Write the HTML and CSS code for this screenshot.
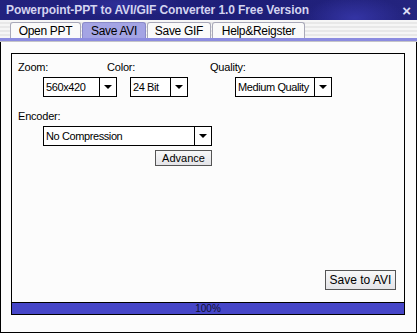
FILE: index.html
```html
<!DOCTYPE html>
<html lang="en">
<head>
    <meta charset="UTF-8">
    <title>Powerpoint-PPT to AVI/GIF Converter</title>
    <link rel="stylesheet" href="styles.css">
</head>
<body>
    <div class="window">
        <div class="titlebar">
            <span class="title">Powerpoint-PPT to AVI/GIF Converter 1.0 Free Version</span>
            <span class="close">&#215;</span>
        </div>

        <div class="tabs">
            <div class="tab">Open PPT</div>
            <div class="tab active">Save AVI</div>
            <div class="tab">Save GIF</div>
            <div class="tab">Help&amp;Reigster</div>
        </div>
        <div class="tab-band"></div>

        <div class="panel">
            <div class="frame">
                <div class="form">
                    <div class="row">
                        <div class="field zoom">
                            <div class="label">Zoom:</div>
                            <div class="combo w-zoom"><span class="value">560x420</span><span class="arrow"></span></div>
                        </div>
                        <div class="field color">
                            <div class="label">Color:</div>
                            <div class="combo w-color"><span class="value">24 Bit</span><span class="arrow"></span></div>
                        </div>
                        <div class="field quality">
                            <div class="label">Quality:</div>
                            <div class="combo w-quality"><span class="value">Medium Quality</span><span class="arrow"></span></div>
                        </div>
                    </div>

                    <div class="field encoder">
                        <div class="label">Encoder:</div>
                        <div class="combo w-encoder"><span class="value">No Compression</span><span class="arrow"></span></div>
                        <div class="advance-row">
                            <button class="btn advance">Advance</button>
                        </div>
                    </div>

                    <div class="save-row">
                        <button class="btn save">Save to AVI</button>
                    </div>
                </div>
                <div class="progress">100%</div>
            </div>
        </div>
    </div>
</body>
</html>
```

FILE: styles.css
```css
body {
    margin: 0;
    width: 417px;
    height: 333px;
    overflow: hidden;
    background: #fcfcfc;
    font-family: "Liberation Sans", Arial, sans-serif;
    color: #000;
}

.window {
    display: flex;
    flex-direction: column;
    height: 333px;
}

.titlebar {
    height: 20px;
    display: flex;
    align-items: center;
    justify-content: space-between;
    padding: 0 6px;
    background:
        radial-gradient(ellipse 50px 22px at 355px 18px, #3434a4, rgba(52, 52, 164, 0)),
        radial-gradient(ellipse 60px 14px at 120px 4px, #2e2e98, rgba(46, 46, 152, 0)),
        linear-gradient(to right, #22227e, #1e1e78 60%, #24247f);
}

.title {
    font-weight: bold;
    font-size: 12px;
    color: #d4d4f0;
    letter-spacing: -0.1px;
}

.close {
    color: #e0e0f8;
    font-size: 15px;
    font-weight: bold;
    line-height: 1;
}

.tabs {
    height: 18px;
    display: flex;
    align-items: flex-end;
    gap: 1px;
    padding-left: 10px;
    background: repeating-linear-gradient(to bottom, #f6f6f6 0 2px, #e8e8e8 2px 4px);
}

.tab {
    box-sizing: border-box;
    height: 16px;
    display: flex;
    align-items: center;
    justify-content: center;
    white-space: nowrap;
    font-size: 12px;
    letter-spacing: -0.3px;
    border: 1px solid #a8a8b8;
    border-bottom: none;
    border-radius: 3px 3px 0 0;
    background: #fafafa;
}

.tab:nth-child(1) { width: 71px; }
.tab:nth-child(2) { width: 64px; }
.tab:nth-child(3) { width: 64px; }
.tab:nth-child(4) { width: 93px; }

.tab.active {
    background: #a4a4e4;
    border-color: #8a8ac8;
}

.tab-band {
    height: 3px;
    background: #8c8ce0;
    border-bottom: 1px solid #c4c4c8;
}

.panel {
    flex: 1;
    border: 1px solid #000;
    border-top: none;
    padding: 11px 11px 17px 10px;
    display: flex;
}

.frame {
    flex: 1;
    border: 1px solid #000;
    display: flex;
    flex-direction: column;
}

.form {
    flex: 1;
    padding: 7px 0 0 6px;
    display: flex;
    flex-direction: column;
}

.row {
    display: flex;
}

.field.zoom { width: 89px; }
.field.color { width: 103px; }

.label {
    font-size: 11px;
    height: 16px;
    letter-spacing: -0.2px;
}

.combo {
    margin-left: 25px;
    height: 18px;
    border: 1px solid #000;
    display: flex;
    background: #fff;
    font-size: 11px;
    letter-spacing: -0.4px;
    white-space: nowrap;
}

.field.color .combo { margin-left: 23px; }

.w-zoom { width: 72px; }
.w-color { width: 56px; }
.w-quality { width: 95px; }
.w-encoder { width: 167px; }

.combo .value {
    flex: 1;
    padding-left: 2px;
    display: flex;
    align-items: center;
    overflow: hidden;
}

.combo .arrow {
    width: 16px;
    border-left: 1px solid #000;
    display: flex;
    align-items: center;
    justify-content: center;
}

.combo .arrow::after {
    content: "";
    border-left: 4px solid transparent;
    border-right: 4px solid transparent;
    border-top: 4px solid #000;
}

.field.encoder {
    margin-top: 13px;
}

.advance-row {
    display: flex;
    justify-content: flex-end;
    width: 194px;
    margin-top: 4px;
}

.btn {
    font-family: inherit;
    font-size: 11px;
    background: linear-gradient(to bottom, #f8f8f8, #e4e4e8);
    border: 1px solid #555;
    padding: 0;
    color: #000;
    white-space: nowrap;
}

.advance {
    width: 57px;
    height: 16px;
}

.save-row {
    margin-top: auto;
    display: flex;
    justify-content: flex-end;
    padding: 0 8px 12px 0;
}

.save {
    width: 71px;
    height: 20px;
    font-size: 12px;
}

.progress {
    height: 11px;
    border-top: 1px solid #000;
    background: #4646c8;
    font-size: 10px;
    line-height: 11px;
    text-align: center;
    color: #101030;
}
```
